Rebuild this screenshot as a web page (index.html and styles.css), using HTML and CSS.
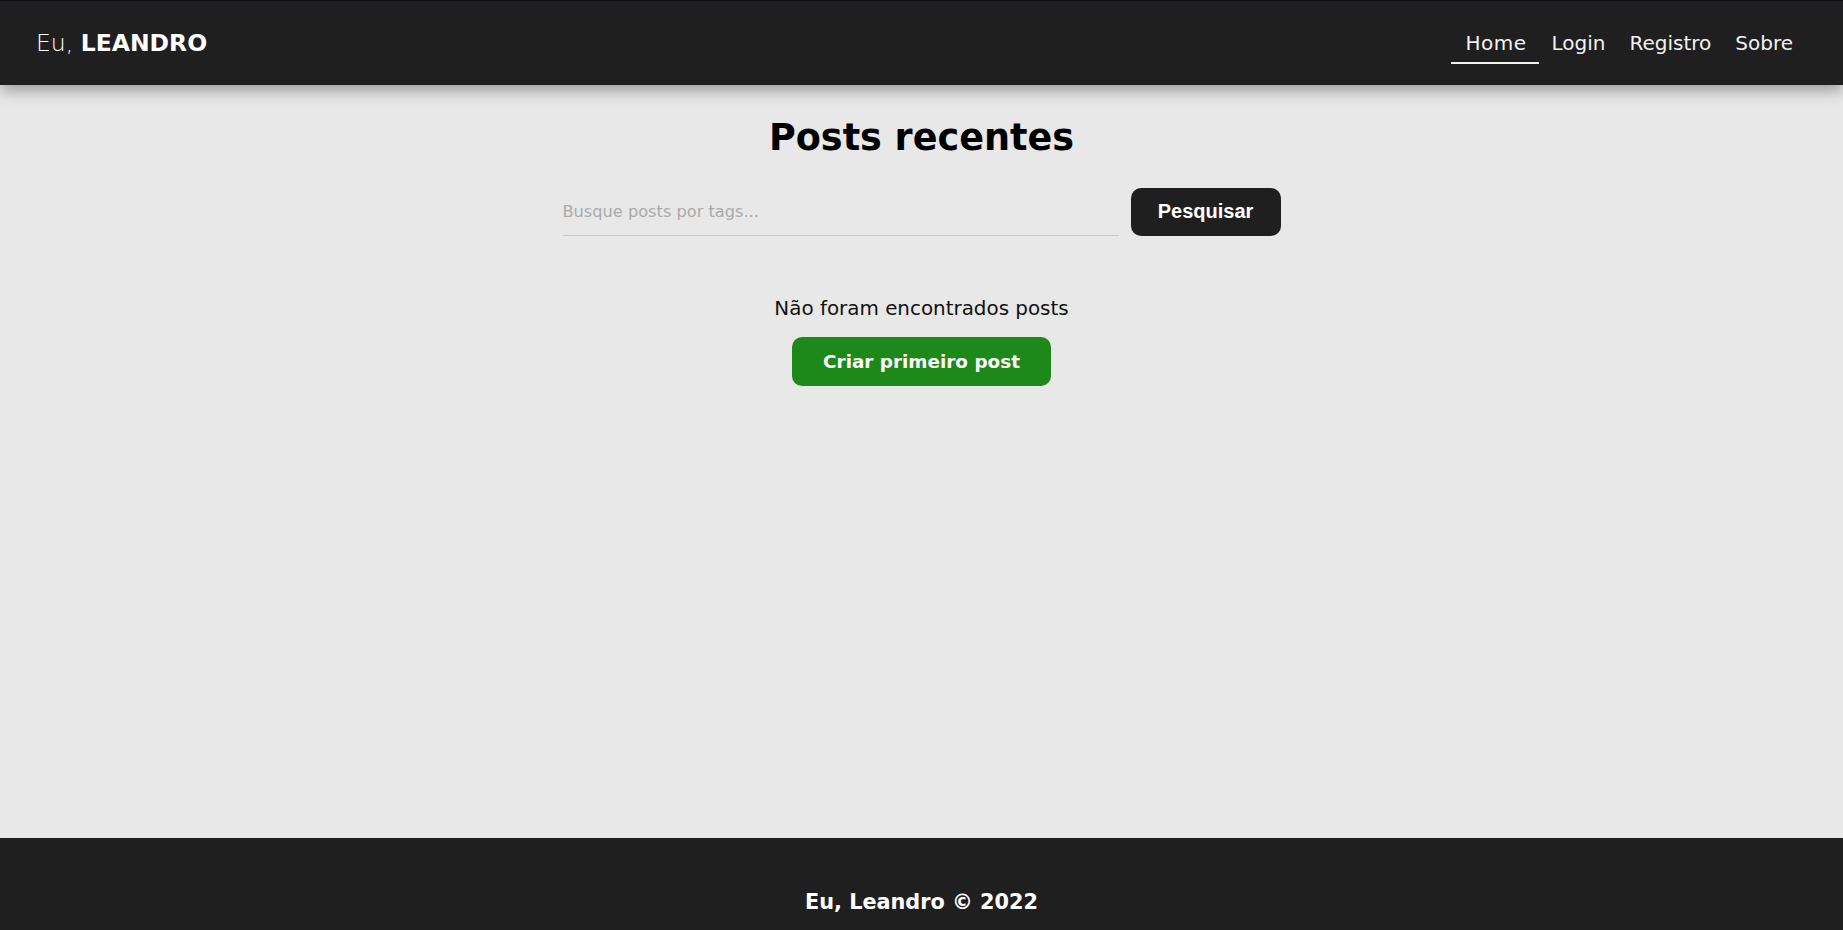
FILE: index.html
```html
<!DOCTYPE html>
<html lang="pt-BR">
<head>
<meta charset="utf-8">
<title>Eu, Leandro</title>
<link rel="stylesheet" href="styles.css">
</head>
<body>
<header class="topbar">
  <a class="logo" href="#"><span class="logo-light">Eu, </span><span class="logo-bold">LEANDRO</span></a>
  <nav class="nav">
    <a class="nav-link active" href="#">Home</a>
    <a class="nav-link" href="#">Login</a>
    <a class="nav-link" href="#">Registro</a>
    <a class="nav-link" href="#">Sobre</a>
  </nav>
</header>
<main class="content">
  <h1 class="title">Posts recentes</h1>
  <form class="search">
    <input class="search-input" type="text" placeholder="Busque posts por tags...">
    <button class="search-btn" type="button">Pesquisar</button>
  </form>
  <p class="empty">Não foram encontrados posts</p>
  <a class="create-btn" href="#">Criar primeiro post</a>
</main>
<footer class="footer">
  <p class="footer-text">Eu, Leandro © 2022</p>
</footer>
</body>
</html>
```

FILE: styles.css
```css
* { box-sizing: border-box; }

html, body { margin: 0; padding: 0; }

body {
  height: 100vh;
  display: flex;
  flex-direction: column;
  background: #e8e8e8;
  font-family: "DejaVu Sans", "Liberation Sans", sans-serif;
  color: #111;
  overflow: hidden;
}

.topbar {
  position: relative;
  z-index: 2;
  flex: 0 0 85px;
  display: flex;
  align-items: center;
  justify-content: space-between;
  padding: 0 38px 0 36px;
  background: #1f1f1f;
  border-top: 1px solid #0e0e16;
  box-shadow: 0 6px 14px rgba(0, 0, 0, 0.32);
}

.logo {
  color: #fff;
  text-decoration: none;
  font-size: 23.5px;
  line-height: 28px;
}

.logo-light { font-weight: 300; }
.logo-bold { font-weight: 900; }

.nav {
  display: flex;
  align-items: center;
}

.nav-link {
  display: block;
  padding: 8px 12px 7px;
  font-size: 20px;
  line-height: 24px;
  color: #f2f2f2;
  text-decoration: none;
  border-bottom: 2px solid transparent;
}

.nav-link.active {
  border-bottom-color: #f2f2f2;
  padding: 8px 13px 7px 14px;
  letter-spacing: 0.5px;
}

.content {
  flex: 1;
  display: flex;
  flex-direction: column;
  align-items: center;
}

.title {
  margin: 35px 0 0;
  font-size: 36.6px;
  line-height: 1;
  font-weight: 700;
  color: #000;
}

.search {
  display: flex;
  gap: 12px;
  margin-top: 31px;
}

.search-input {
  width: 556px;
  height: 48px;
  padding: 0;
  border: 0;
  border-bottom: 1px solid #c8c8c8;
  background: transparent;
  font-family: "DejaVu Sans", sans-serif;
  font-size: 16.2px;
  color: #333;
  outline: none;
}

.search-input::placeholder { color: #aaa; }

.search-btn {
  width: 150px;
  height: 48px;
  border: 0;
  border-radius: 10px;
  background: #1f1f1f;
  color: #fff;
  font-family: "Liberation Sans", Arial, sans-serif;
  font-weight: 700;
  font-size: 20px;
}

.empty {
  margin: 61px 0 0;
  font-size: 19.9px;
  line-height: 1.2;
  color: #111;
}

.create-btn {
  margin-top: 17px;
  width: 259px;
  height: 49px;
  display: flex;
  align-items: center;
  justify-content: center;
  border-radius: 10px;
  background: #1d891b;
  color: #fff;
  font-weight: 700;
  font-size: 18.4px;
  text-decoration: none;
}

.footer {
  flex: 0 0 92px;
  background: #1f1f1f;
  padding-top: 52px;
}

.footer-text {
  margin: 0;
  text-align: center;
  color: #fff;
  font-weight: 700;
  font-size: 20.8px;
  line-height: 24px;
}
```
